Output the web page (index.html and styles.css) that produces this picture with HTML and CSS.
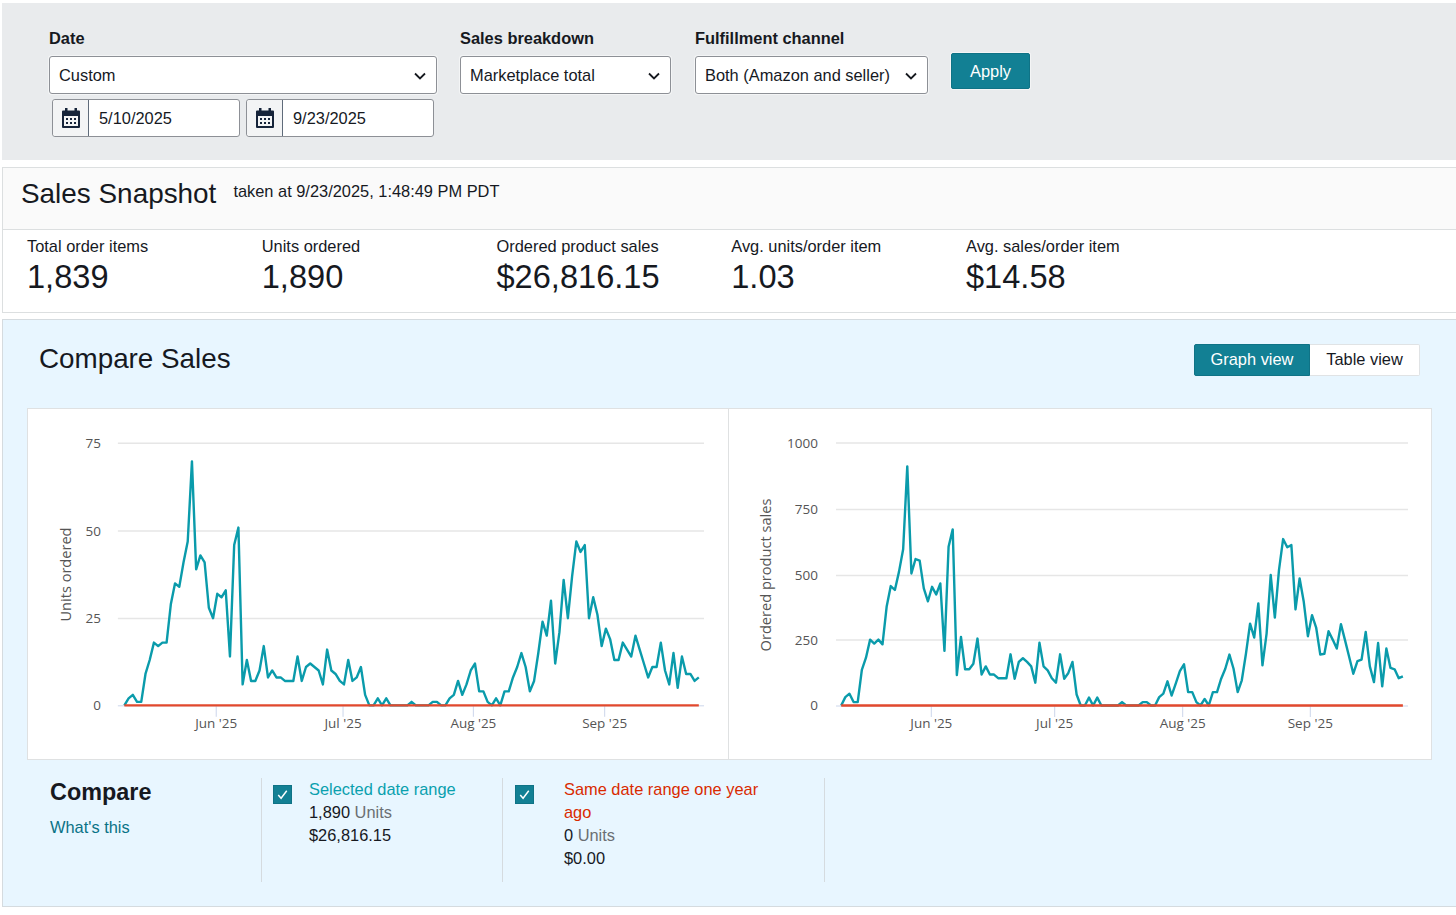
FILE: index.html
```html
<!DOCTYPE html>
<html lang="en">
<head>
<meta charset="utf-8">
<title>Sales Dashboard</title>
<link rel="stylesheet" href="styles.css">
</head>
<body>
<section class="filters">
  <div class="group group-date">
    <div class="label">Date</div>
    <div class="select select-date"><span>Custom</span><svg class="chev" viewBox="0 0 12 8"><path d="M1 1.5 6 6.5 11 1.5"/></svg></div>
    <div class="dates">
      <div class="date"><div class="cal"><svg class="cal-icon" viewBox="0 0 18 20"><path class="cal-body" fill-rule="evenodd" d="M3 0h2.500v2.500h7V0H15v2.500h2a1 1 0 0 1 1 1V19a1 1 0 0 1-1 1H1a1 1 0 0 1-1-1V3.500a1 1 0 0 1 1-1h2zM2 8v10h14V8z"/><path class="cal-body" d="M4 10h2v2H4zM8 10h2v2H8zM12 10h2v2h-2zM4 14h2v2H4zM8 14h2v2H8zM12 14h2v2h-2z"/></svg></div><div class="date-val">5/10/2025</div></div>
      <div class="date"><div class="cal"><svg class="cal-icon" viewBox="0 0 18 20"><path class="cal-body" fill-rule="evenodd" d="M3 0h2.500v2.500h7V0H15v2.500h2a1 1 0 0 1 1 1V19a1 1 0 0 1-1 1H1a1 1 0 0 1-1-1V3.500a1 1 0 0 1 1-1h2zM2 8v10h14V8z"/><path class="cal-body" d="M4 10h2v2H4zM8 10h2v2H8zM12 10h2v2h-2zM4 14h2v2H4zM8 14h2v2H8zM12 14h2v2h-2z"/></svg></div><div class="date-val">9/23/2025</div></div>
    </div>
  </div>
  <div class="group group-breakdown">
    <div class="label">Sales breakdown</div>
    <div class="select select-breakdown"><span>Marketplace total</span><svg class="chev" viewBox="0 0 12 8"><path d="M1 1.5 6 6.5 11 1.5"/></svg></div>
  </div>
  <div class="group group-channel">
    <div class="label">Fulfillment channel</div>
    <div class="select select-channel"><span>Both (Amazon and seller)</span><svg class="chev" viewBox="0 0 12 8"><path d="M1 1.5 6 6.5 11 1.5"/></svg></div>
  </div>
  <button class="apply">Apply</button>
</section>

<section class="snapshot">
  <header class="snap-head">
    <h2 class="snap-title">Sales Snapshot</h2>
    <span class="snap-time">taken at 9/23/2025, 1:48:49 PM PDT</span>
  </header>
  <div class="stats">
    <div class="stat"><div class="stat-label">Total order items</div><div class="stat-value">1,839</div></div>
    <div class="stat"><div class="stat-label">Units ordered</div><div class="stat-value">1,890</div></div>
    <div class="stat"><div class="stat-label">Ordered product sales</div><div class="stat-value">$26,816.15</div></div>
    <div class="stat"><div class="stat-label">Avg. units/order item</div><div class="stat-value">1.03</div></div>
    <div class="stat"><div class="stat-label">Avg. sales/order item</div><div class="stat-value">$14.58</div></div>
  </div>
</section>

<section class="panel">
  <header class="panel-head">
    <h2 class="panel-title">Compare Sales</h2>
    <div class="toggle"><div class="tog tog-on">Graph view</div><div class="tog">Table view</div></div>
  </header>
  <div class="charts">
    <svg class="chart chart-left" viewBox="0 0 701 350">
      <g class="grid"><path d="M90 34H677M90 122H677M90 209.500H677"/></g>
      <path class="axis" d="M90 297H677M188.500 297V308M315.500 297V308M446 297V308M577.500 297V308"/>
      <g class="ylabels">
        <text x="73" y="39">75</text><text x="73" y="127">50</text><text x="73" y="214">25</text><text x="73" y="301">0</text>
      </g>
      <g class="xlabels">
        <text x="188.500" y="319">Jun '25</text><text x="315.500" y="319">Jul '25</text><text x="446" y="319">Aug '25</text><text x="577.500" y="319">Sep '25</text>
      </g>
      <text class="ytitle" transform="translate(43 165.500) rotate(-90)">Units ordered</text>
      <g transform="translate(96.500 296.500) scale(4.23 -3.49)">
        <polyline class="series" points="0,0 1,2 2,3 3,1 4,1 5,9 6,13 7,18 8,17 9,18 10,18 11,29 12,35 13,34 14,41 15,47 16,70 17,39 18,43 19,41 20,28 21,25 22,32 23,31 24,33 25,14 26,46 27,51 28,6 29,13 30,7 31,7 32,10 33,17 34,8 35,10 36,8 37,8 38,7 39,7 40,7 41,14 42,7 43,11 44,12 45,11 46,10 47,6 48,16 49,10 50,9 51,7 52,6 53,13 54,7 55,8 56,11 57,3 58,0 59,0 60,2 61,0 62,2 63,0 64,0 65,0 66,0 67,0 68,1 69,0 70,0 71,0 72,0 73,1 74,1 75,0 76,0 77,2 78,3 79,7 80,3 81,6 82,10 83,12 84,4 85,4 86,1 87,0 88,2 89,0 90,4 91,4 92,8 93,11 94,15 95,11 96,4 97,7 98,15 99,24 100,20 101,30 102,12 103,21 104,36 105,25 106,37 107,47 108,44 109,46 110,25 111,31 112,26 113,17 114,22 115,19 116,13 117,13 118,18 119,16 120,14 121,20 122,16 123,12 124,8 125,11 126,11 127,18 128,10 129,6 130,15 131,5 132,14 133,9 134,9 135,7 136,8"/>
        <polyline class="series-old" points="0,0 136,0"/>
      </g>
    </svg>
    <svg class="chart" viewBox="0 0 701 350">
      <g class="grid"><path d="M107 34H679M107 100.500H679M107 166.500H679M107 231H679"/></g>
      <path class="axis" d="M107 297H679M202.300 297V308M325.700 297V308M453.700 297V308M581.300 297V308"/>
      <g class="ylabels">
        <text x="89" y="39">1000</text><text x="89" y="105">750</text><text x="89" y="171">500</text><text x="89" y="236">250</text><text x="89" y="301">0</text>
      </g>
      <g class="xlabels">
        <text x="202.300" y="319">Jun '25</text><text x="325.700" y="319">Jul '25</text><text x="453.700" y="319">Aug '25</text><text x="581.300" y="319">Sep '25</text>
      </g>
      <text class="ytitle" transform="translate(42 166) rotate(-90)">Ordered product sales</text>
      <g transform="translate(112.200 296.500) scale(4.13 -0.2625)">
        <polyline class="series" points="0,0 1,32 2,45 3,13 4,13 5,136 6,182 7,251 8,236 9,251 10,233 11,376 12,455 13,440 14,510 15,595 16,911 17,503 18,558 19,552 20,446 21,397 22,452 23,423 24,465 25,208 26,605 27,671 28,116 29,261 30,138 31,138 32,159 33,255 34,118 35,149 36,118 37,118 38,104 39,104 40,104 41,195 42,102 43,166 44,180 45,166 46,149 47,87 48,239 49,149 50,134 51,104 52,87 53,195 54,102 55,124 56,166 57,42 58,0 59,0 60,30 61,0 62,30 63,0 64,0 65,0 66,0 67,0 68,13 69,0 70,0 71,0 72,0 73,13 74,13 75,0 76,0 77,32 78,45 79,92 80,38 81,83 82,131 83,157 84,51 85,51 86,13 87,0 88,25 89,0 90,51 91,51 92,102 93,140 94,194 95,140 96,51 97,96 98,197 99,312 100,259 101,389 102,153 103,274 104,497 105,335 106,516 107,634 108,603 109,611 110,366 111,484 112,395 113,264 114,344 115,297 116,194 117,197 118,283 119,251 120,217 121,310 122,248 123,185 124,121 125,169 126,175 127,280 128,149 129,89 130,238 131,73 132,217 133,143 134,138 135,104 136,111"/>
        <polyline class="series-old" points="0,0 136,0"/>
      </g>
    </svg>
  </div>
  <div class="compare">
    <div class="cmp-intro">
      <div class="cmp-title">Compare</div>
      <div class="cmp-link">What's this</div>
    </div>
    <div class="cmp-item cmp-item-a">
      <div class="check"><svg viewBox="0 0 18 18"><path d="M4.500 9.500 7.500 13 13.500 5"/></svg></div>
      <div class="cmp-text">
        <div class="cmp-name cmp-teal">Selected date range</div>
        <div>1,890 <span class="muted">Units</span></div>
        <div>$26,816.15</div>
      </div>
    </div>
    <div class="cmp-item cmp-item-b">
      <div class="check"><svg viewBox="0 0 18 18"><path d="M4.500 9.500 7.500 13 13.500 5"/></svg></div>
      <div class="cmp-text">
        <div class="cmp-name cmp-red">Same date range one year ago</div>
        <div>0 <span class="muted">Units</span></div>
        <div>$0.00</div>
      </div>
    </div>
  </div>
</section>
</body>
</html>
```

FILE: styles.css
```css
* { box-sizing: border-box; }
html, body { margin: 0; padding: 0; background: #fff; }
body {
  font-family: "Liberation Sans", Arial, sans-serif;
  color: #16191f;
  font-size: 16.4px;
  height: 915px;
  overflow: hidden;
  padding: 3px 0 0 2px;
}

/* Filter bar */
.filters {
  display: flex;
  align-items: flex-start;
  height: 157px;
  background: #e9ebed;
  padding: 26px 0 0 47px;
}
.group { display: flex; flex-direction: column; }
.group-date { width: 388px; margin-right: 23px; }
.group-breakdown { width: 211px; margin-right: 24px; }
.group-channel { width: 233px; margin-right: 23px; }
.label { font-weight: 700; font-size: 16.4px; line-height: 19px; margin-bottom: 8px; color: #16191f; }
.select {
  display: flex;
  align-items: center;
  justify-content: space-between;
  height: 38px;
  background: #fff;
  border: 1px solid #8d9096;
  border-radius: 3px;
  box-shadow: 0 0 0 1px #f4f5f6;
  padding: 1px 10px 0 9px;
  font-size: 16.4px;
}
.chev { width: 12px; height: 8px; fill: none; stroke: #16191f; stroke-width: 1.8; flex: none; }
.dates { display: flex; gap: 6px; padding-left: 3px; margin-top: 5px; }
.date {
  display: flex;
  width: 188px;
  height: 38px;
  background: #fff;
  border: 1px solid #8d9096;
  border-radius: 3px;
}
.cal {
  width: 36px;
  display: flex;
  align-items: center;
  justify-content: center;
  background: #f3f4f5;
  border-right: 1px solid #5f6b7a;
  border-radius: 3px 0 0 3px;
}
.cal-icon { width: 18px; height: 20px; }
.cal-body { fill: #16243a; }
.date-val { padding-left: 10px; line-height: 36px; }
.apply {
  margin-top: 24px;
  width: 79px;
  height: 36px;
  background: #128094;
  color: #fff;
  font: 16.4px "Liberation Sans", Arial, sans-serif;
  border: 1px solid #0f7386;
  border-radius: 2px;
  box-shadow: 0 0 0 1px #f4f5f6;
  padding: 1px 0 0;
}

/* Snapshot */
.snapshot {
  margin-top: 7px;
  height: 146px;
  border: 1px solid #dcdfe0;
  border-right: 0;
  background: #fff;
}
.snap-head {
  display: flex;
  align-items: flex-start;
  height: 62px;
  background: #fafafa;
  border-bottom: 1px solid #dcdfe0;
  padding-left: 18px;
}
.snap-title { margin: 10px 0 0; font-size: 27.9px; font-weight: 400; line-height: 32px; }
.snap-time { margin: 13px 0 0 17px; font-size: 16.4px; line-height: 20px; }
.stats { display: grid; grid-template-columns: repeat(5, 234.75px); padding: 6px 0 0 24px; }
.stat-label { font-size: 16.4px; line-height: 20px; }
.stat-value { font-size: 32.6px; line-height: 40px; margin-top: 1px; }

/* Compare panel */
.panel {
  margin-top: 6px;
  height: 588px;
  background: #e8f6ff;
  border: 1px solid #d5dbdf;
  border-right: 0;
}
.panel-head {
  display: flex;
  justify-content: space-between;
  height: 88px;
  padding: 24px 36px 0 36px;
}
.panel-title { margin: 0; font-size: 27.8px; font-weight: 400; line-height: 30px; }
.toggle { display: flex; height: 32px; }
.tog {
  width: 110px;
  line-height: 29px;
  text-align: center;
  background: #fff;
  border: 1px solid #e0e3e5;
  border-left: 0;
  border-radius: 0 2px 2px 0;
}
.tog-on {
  width: 116px;
  background: #128094;
  border-color: #0f7386;
  border-left: 1px solid #0f7386;
  color: #fff;
  border-radius: 2px 0 0 2px;
}
.charts {
  display: flex;
  margin: 0 24px;
  height: 352px;
  background: #fff;
  border: 1px solid #dfe1e2;
}
.chart { display: block; width: 701px; height: 350px; flex: none; }
.chart-left { border-right: 1px solid #dfe1e2; }
.grid path { stroke: #e6e6e6; stroke-width: 1.5; fill: none; }
.axis { stroke: #ccd6eb; stroke-width: 1; fill: none; }
.ylabels text, .xlabels text {
  font-family: "Open Sans", sans-serif;
  font-size: 13.5px;
  fill: #555;
}
.ylabels text { text-anchor: end; }
.xlabels text { text-anchor: middle; }
.ytitle {
  font-family: "Open Sans", sans-serif;
  font-size: 14.6px;
  fill: #555;
  text-anchor: middle;
}
.series, .series-old { fill: none; vector-effect: non-scaling-stroke; stroke-linejoin: round; stroke-width: 2.4px; }
.series { stroke: #0a9bab; }
.series-old { stroke: #e2492d; }

/* Compare row */
.compare { display: flex; margin: 18px 0 0 24px; height: 104px; }
.cmp-intro { width: 235px; padding-left: 23px; border-right: 1px solid #d5dbdf; }
.cmp-title { font-size: 23.4px; font-weight: 700; line-height: 28px; }
.cmp-link { margin-top: 11px; color: #0a7286; line-height: 20px; }
.cmp-item { display: flex; border-right: 1px solid #d5dbdf; padding-left: 11px; }
.cmp-item-a { width: 241px; }
.cmp-item-b { width: 322px; padding-left: 12px; }
.check {
  flex: none;
  width: 19px;
  height: 19px;
  margin-top: 7px;
  background: #128094;
  border: 1px solid #0f7386;
}
.check svg { display: block; width: 17px; height: 17px; fill: none; stroke: #fff; stroke-width: 1.5; }
.cmp-item-a .cmp-text { margin-left: 17px; }
.cmp-item-b .cmp-text { margin-left: 30px; width: 220px; }
.cmp-text { line-height: 23px; }
.cmp-teal { color: #0aa0ae; }
.cmp-red { color: #d92a00; }
.muted { color: #6b6f73; }
```
